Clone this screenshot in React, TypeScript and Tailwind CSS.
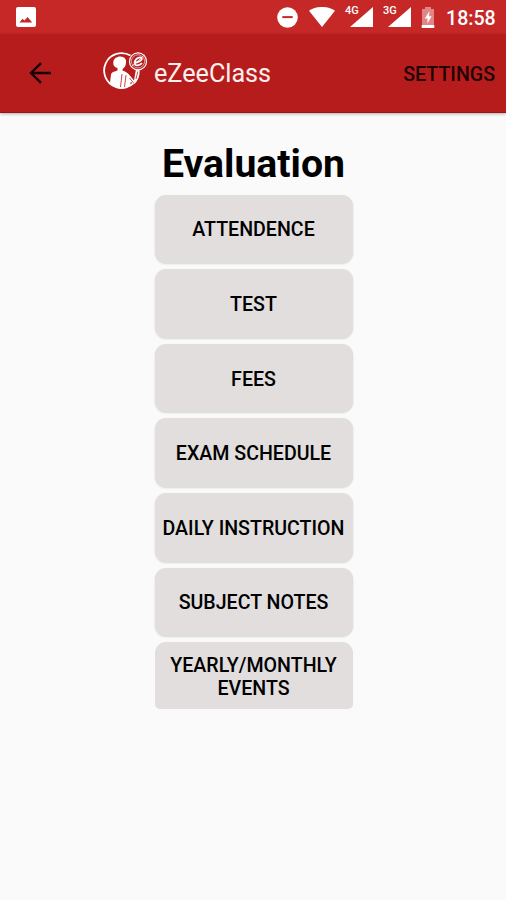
const actions = [
  'ATTENDENCE',
  'TEST',
  'FEES',
  'EXAM SCHEDULE',
  'DAILY INSTRUCTION',
  'SUBJECT NOTES',
];

function PhotoIcon() {
  return (
    <svg className="h-5 w-5" viewBox="0 0 20 20">
      <rect width="20" height="20" rx="2" fill="#fff" />
      <path d="M3.5 15.5 6.5 11.8 8.4 13.5 11.6 10 16.2 15.5Z" fill="#c62828" />
    </svg>
  );
}

function Signal({ label }: { label: string }) {
  return (
    <div className="relative h-5 w-[28px]">
      <span className="absolute -top-[2px] left-0 text-[11px] leading-[11px] font-medium">{label}</span>
      <svg className="absolute right-0 top-0 h-5 w-[23px]" viewBox="0 0 23 20">
        <path d="M23 0V20H0Z" fill="#fff" />
      </svg>
    </div>
  );
}

function Logo() {
  return (
    <svg className="h-[40px] w-[46px]" viewBox="0 0 46 40" fill="none">
      <path d="M28.5 4.6A17.4 17.4 0 1 0 36.6 23" stroke="#fff" strokeWidth="1.8" />
      <path
        d="M11.3 11.5C11.3 6 18 4 22 6.5C24.7 8.5 24.5 12 23 15.5C21.5 17.5 20.3 17.5 20.5 19.5C23 20.5 25 21.5 26.5 23L32 29.5L34 18L37.8 19.5C37.5 25 35.5 30 32.5 33L28.5 31V35C22 39 13 38.5 8 32L9 23.5C10 20.5 13 20.5 15.5 19.5L15.5 17C12.5 16 11 14.5 11.3 11.5Z"
        fill="#fff"
      />
      <path d="M20 23 18.5 36M24 24 22.5 36M27.5 27 32 32.5M35.8 20.5 34 28" stroke="#b71c1c" strokeWidth=".8" />
      <circle cx="36" cy="10.4" r="8.5" fill="#b71c1c" stroke="#fff" strokeWidth="1.2" />
      <circle cx="36" cy="10.4" r="6.6" stroke="#fff" strokeWidth=".6" />
      <path d="M32 12C36 11.6 40.5 9.4 39.7 7.1C38.6 4.9 32.8 7.6 32.6 11.8C32.7 15.6 37.2 14.8 40 12.1" stroke="#fff" strokeWidth="1.8" />
      <path d="M29 16 42.5 4" stroke="#fff" strokeWidth=".8" />
    </svg>
  );
}

function StatusBar() {
  return (
    <header className="flex h-[34px] items-center bg-[#c62828] pr-[11px] pl-4 text-white">
      <PhotoIcon />
      <div className="ml-auto flex items-center">
        <svg className="mt-px h-[21px] w-[21px]" viewBox="0 0 21 21">
          <circle cx="10.5" cy="10.5" r="10.3" fill="#fff" />
          <path d="M5.3 9.1H15.7V11.1H5.3Z" fill="#c62828" />
        </svg>
        <svg className="ml-[11px] h-5 w-[26px]" viewBox="0 0 26 20">
          <path d="M0 3.8C7-1.3 19-1.3 26 3.8L13 20Z" fill="#fff" />
        </svg>
        <div className="ml-[10px]"><Signal label="4G" /></div>
        <div className="ml-[10px]"><Signal label="3G" /></div>
        <svg className="ml-[10px] h-[21px] w-[14px]" viewBox="0 0 14 21">
          <path d="M4 0H10V2H13V18H1V2H4Z" fill="#e18585" />
          <path d="M8.5 4 3.8 11.4H6.5V16.5L10.6 9.2H8Z" fill="#fff" />
          <path d="M.7 18H13.3V21H.7Z" fill="#fff" />
        </svg>
        <span className="ml-[11px] w-[49px] pt-[3px] text-[19.6px] leading-[31px] font-medium whitespace-nowrap">18:58</span>
      </div>
    </header>
  );
}

function AppBar() {
  return (
    <nav className="flex h-[79px] items-center border-b border-[#a31010] bg-[#b71c1c] pr-[11px] pl-[29px] shadow-[0_1px_3px_rgba(0,0,0,0.3)]">
      <svg className="h-[22px] w-[22px]" viewBox="0 0 22 22" fill="none" stroke="#170202" strokeWidth="2.4">
        <path d="M22 11H2M12 1.2 2 11 12 20.8" />
      </svg>
      <div className="ml-[51px] -mt-[5px]"><Logo /></div>
      <h1 className="ml-[6px] pt-[2px] text-[25.2px] leading-8 text-[#fff0f0]">eZeeClass</h1>
      <button className="ml-auto pt-[3px] text-[19.6px] leading-6 font-medium text-[#220303]">SETTINGS</button>
    </nav>
  );
}

export default function App() {
  return (
    <div className="min-h-[900px] w-full bg-[#fafafa] font-['Roboto',sans-serif] text-black">
      <StatusBar />
      <AppBar />
      <main className="flex flex-col items-center pt-[28px] pl-px">
        <h2 className="h-[53.7px] text-[39.2px] leading-[46px] font-bold">Evaluation</h2>
        <div className="flex w-[198px] flex-col gap-[6px]">
          {actions.map((label) => (
            <button
              key={label}
              className="h-[68.6px] rounded-[11px] bg-[#e1dedd] pt-[2px] text-[19.6px] leading-[23px] font-medium whitespace-nowrap shadow-[0_1px_2px_rgba(0,0,0,0.15)]"
            >
              {label}
            </button>
          ))}
          <button className="h-[67px] rounded-t-[11px] rounded-b-[5px] bg-[#e1dedd] pt-[2px] text-[19.6px] leading-[23px] font-medium">
            YEARLY/MONTHLY EVENTS
          </button>
        </div>
      </main>
    </div>
  );
}
